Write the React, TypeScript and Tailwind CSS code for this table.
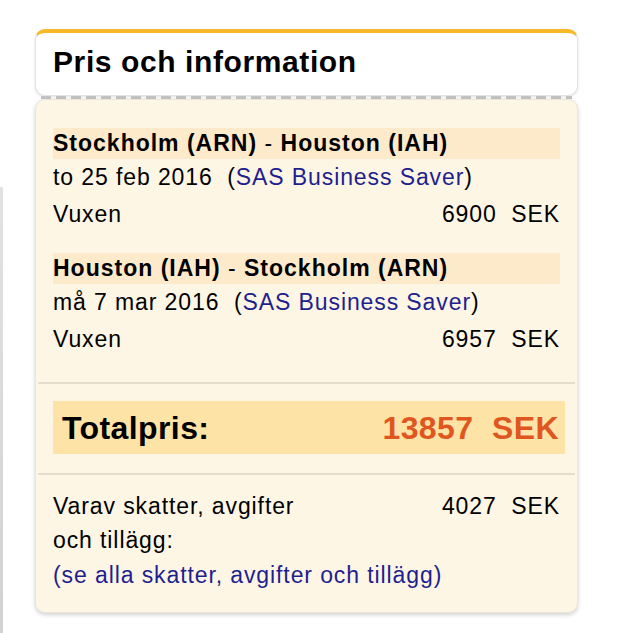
import React from 'react';

interface Leg {
  from: string;
  to: string;
  date: string;
  fare: string;
  price: string;
}

const legs: Leg[] = [
  { from: 'Stockholm (ARN)', to: 'Houston (IAH)', date: 'to 25 feb 2016', fare: 'SAS Business Saver', price: '6900' },
  { from: 'Houston (IAH)', to: 'Stockholm (ARN)', date: 'må 7 mar 2016', fare: 'SAS Business Saver', price: '6957' },
];

const LegBlock: React.FC<{ leg: Leg; first?: boolean }> = ({ leg, first }) => (
  <div className={first ? '' : 'mt-[20px]'}>
    <div className="h-[31px] bg-[#fdeacb] flex items-center tracking-[1px]">
      <span>
        <span className="font-bold">{leg.from}</span> - <span className="font-bold">{leg.to}</span>
      </span>
    </div>
    <div className="h-[37px] flex items-center whitespace-pre">
      <span>
        {leg.date}  (<span className="text-[#1f1f8f]">{leg.fare}</span>)
      </span>
    </div>
    <div className="h-[37px] flex items-center justify-between whitespace-pre">
      <span>Vuxen</span>
      <span>{leg.price}  SEK</span>
    </div>
  </div>
);

export default function App() {
  return (
    <div className="w-[617px] h-[633px] bg-white flex text-black font-['Liberation_Sans',Arial,sans-serif]">
      {/* kant från sidan bakom */}
      <div className="w-[3px] mt-[187px] bg-gradient-to-b from-[#e2e2e2] to-[#d2d2d2]" />

      <div className="ml-[32px] mt-[29px] w-[543px]">
        {/* rubrik */}
        <div className="h-[67px] bg-white rounded-[10px] border border-[#e3e3e3] border-t-[4px] border-t-[#f7b829] shadow-[0_1px_3px_rgba(0,0,0,0.12)] flex items-center px-[17px] pb-[5px]">
          <h1 className="text-[30px] font-bold tracking-[0.6px]">Pris och information</h1>
        </div>
        <div className="mx-[6px] h-[3px] bg-[repeating-linear-gradient(90deg,#c2c2c2_0_10px,transparent_10px_15px)]" />

        {/* innehåll */}
        <div className="bg-[#fef6e5] rounded-[10px] border border-[#ece6da] shadow-[0_2px_4px_rgba(0,0,0,0.18)] pt-[28px] pb-[19px] text-[23px] tracking-[0.9px]">
          <div className="px-[17px]">
            {legs.map((leg, i) => (
              <LegBlock key={i} leg={leg} first={i === 0} />
            ))}
          </div>

          <div className="mt-[24px] mx-[2px] h-[2px] bg-[#e4dccd]" />

          <div className="pl-[17px] pr-[12px] mt-[17px]">
            <div className="h-[53px] bg-[#fde3a6] flex items-center justify-between pl-[9px] pr-[6px] text-[32px] font-bold tracking-[0.4px] whitespace-pre">
              <span>Totalpris:</span>
              <span className="text-[#e0561f]">13857  SEK</span>
            </div>
          </div>

          <div className="mt-[19px] mx-[2px] h-[2px] bg-[#e4dccd]" />

          <div className="px-[17px] mt-[14px]">
            <div className="h-[34px] flex items-center justify-between whitespace-pre">
              <span>Varav skatter, avgifter</span>
              <span>4027  SEK</span>
            </div>
            <div className="h-[34px] flex items-center">och tillägg:</div>
            <div className="h-[36px] flex items-center text-[#1f1f8f]">(se alla skatter, avgifter och tillägg)</div>
          </div>
        </div>
      </div>
    </div>
  );
}
